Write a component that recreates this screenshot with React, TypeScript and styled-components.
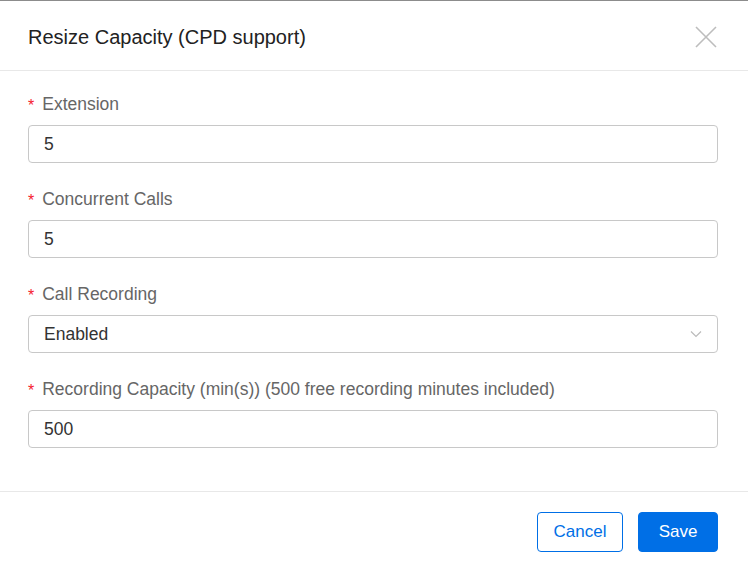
import React from "react";
import styled, { createGlobalStyle } from "styled-components";

const GlobalStyle = createGlobalStyle`
  html, body {
    margin: 0;
    padding: 0;
    background: #fff;
  }
  body {
    font-family: "Liberation Sans", Arial, sans-serif;
  }
`;

const Dialog = styled.div`
  box-sizing: border-box;
  width: 748px;
  height: 570px;
  background: #fff;
  border-top: 1px solid #8c8c8c;
  display: flex;
  flex-direction: column;
`;

const Header = styled.div`
  box-sizing: border-box;
  flex: none;
  height: 70px;
  padding: 2px 30px 0 28px;
  display: flex;
  align-items: center;
  justify-content: space-between;
  border-bottom: 1px solid #e8e8e8;
`;

const Title = styled.h2`
  margin: 0;
  font-size: 20px;
  line-height: 24px;
  font-weight: 400;
  color: #222;
`;

const CloseButton = styled.button`
  border: 0;
  background: none;
  padding: 0;
  width: 24px;
  height: 24px;
  display: flex;
  align-items: center;
  justify-content: center;
  cursor: pointer;
`;

const Body = styled.div`
  flex: none;
  padding: 22px 30px 18px 28px;
  border-bottom: 1px solid #e8e8e8;
`;

const Field = styled.div`
  margin-bottom: 25px;
`;

const Label = styled.label`
  display: flex;
  align-items: center;
  height: 22px;
  font-size: 17.5px;
  color: #666;
  margin-bottom: 10px;
`;

const Star = styled.span`
  color: #f5222d;
  font-size: 16px;
  line-height: 1;
  margin-right: 8px;
  position: relative;
  top: 2px;
`;

const Box = styled.div`
  box-sizing: border-box;
  height: 38px;
  border: 1px solid #c8c8c8;
  border-radius: 4px;
  padding: 0 15px;
  display: flex;
  align-items: center;
  justify-content: space-between;
  font-size: 17.5px;
  color: #333;
`;

const Footer = styled.div`
  flex: 1;
  padding: 20px 30px 0 0;
  box-sizing: border-box;
  display: flex;
  justify-content: flex-end;
  gap: 15px;
`;

const Button = styled.button<{ $primary?: boolean }>`
  box-sizing: border-box;
  height: 40px;
  padding: 0;
  width: ${(p) => (p.$primary ? "80px" : "86px")};
  border-radius: 4px;
  font-family: "Liberation Sans", Arial, sans-serif;
  font-size: 17px;
  border: 1px solid #006fe6;
  background: ${(p) => (p.$primary ? "#006fe6" : "#fff")};
  color: ${(p) => (p.$primary ? "#fff" : "#006fe6")};
  cursor: pointer;
`;

const fields = [
  { label: "Extension", value: "5" },
  { label: "Concurrent Calls", value: "5" },
  { label: "Call Recording", value: "Enabled", select: true },
  { label: "Recording Capacity (min(s)) (500 free recording minutes included)", value: "500" },
];

export default function App() {
  return (
    <>
      <GlobalStyle />
      <Dialog>
        <Header>
          <Title>Resize Capacity (CPD support)</Title>
          <CloseButton aria-label="close">
            <svg width="22" height="22" viewBox="0 0 22 22">
              <path d="M1 1L21 21M21 1L1 21" stroke="#bdbdbd" strokeWidth="1.6" fill="none" />
            </svg>
          </CloseButton>
        </Header>
        <Body>
          {fields.map((f) => (
            <Field key={f.label}>
              <Label>
                <Star>*</Star>
                {f.label}
              </Label>
              <Box>
                <span>{f.value}</span>
                {f.select && (
                  <svg width="12" height="8" viewBox="0 0 12 8">
                    <path d="M1 1.5L6 6.5L11 1.5" stroke="#bbb" strokeWidth="1.2" fill="none" />
                  </svg>
                )}
              </Box>
            </Field>
          ))}
        </Body>
        <Footer>
          <Button>Cancel</Button>
          <Button $primary>Save</Button>
        </Footer>
      </Dialog>
    </>
  );
}
